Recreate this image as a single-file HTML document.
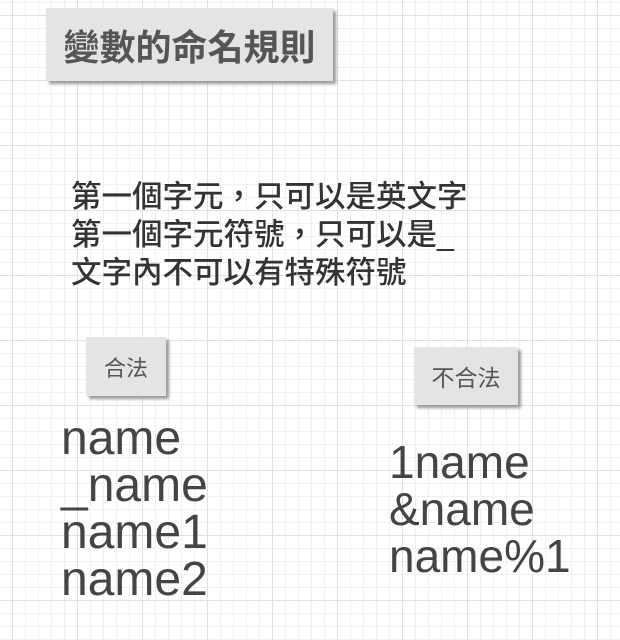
<!DOCTYPE html><html><head><meta charset="utf-8"><style>
body{margin:0;width:620px;height:640px;overflow:hidden;background-color:#fff;
background-image:linear-gradient(#e0e0e0 1px,transparent 1px),linear-gradient(90deg,#e0e0e0 1px,transparent 1px),linear-gradient(#f0f0f0 1px,transparent 1px),linear-gradient(90deg,#f0f0f0 1px,transparent 1px);
background-size:65px 65px,65px 65px,13px 13px,13px 13px;background-position:12px 15px,12px 15px,12px 2px,12px 2px;
font-family:"Liberation Sans","Noto Sans CJK TC",sans-serif;color:#444;position:relative}
.box{position:absolute;background:#e4e4e4;box-shadow:3px 3px 3px #999;display:flex;align-items:center;justify-content:center;color:#555}
.t{position:absolute;white-space:nowrap}
</style></head><body>
<div class="box" style="left:46px;top:8px;width:287px;height:73px;font-size:36px;font-weight:bold">變數的命名規則</div>
<div class="t" style="left:71px;top:178px;font-size:30.5px;line-height:38px;font-weight:500;color:#333">第一個字元，只可以是英文字<br>第一個字元符號，只可以是_<br>文字內不可以有特殊符號</div>
<div class="box" style="left:86px;top:337px;width:80px;height:59px;font-size:22px">合法</div>
<div class="box" style="left:414px;top:347px;width:104px;height:58px;font-size:23px">不合法</div>
<div class="t" style="left:61px;top:415px;font-size:48px;line-height:47px">name<br>_name<br>name1<br>name2</div>
<div class="t" style="left:389px;top:439px;font-size:46px;line-height:47px">1name<br>&amp;name<br>name%1</div>
</body></html>
